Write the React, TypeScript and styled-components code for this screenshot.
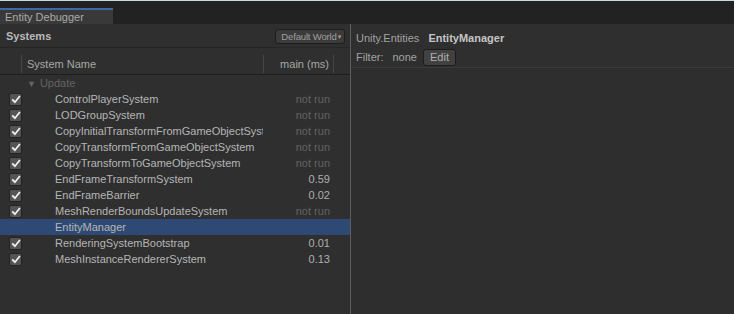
import React from "react";
import styled, { createGlobalStyle } from "styled-components";

interface ISystemRow {
  name: string;
  time?: string;
  enabled?: boolean;
  selected?: boolean;
}

const rows: ISystemRow[] = [
  { name: "ControlPlayerSystem", time: "not run", enabled: true },
  { name: "LODGroupSystem", time: "not run", enabled: true },
  { name: "CopyInitialTransformFromGameObjectSystem", time: "not run", enabled: true },
  { name: "CopyTransformFromGameObjectSystem", time: "not run", enabled: true },
  { name: "CopyTransformToGameObjectSystem", time: "not run", enabled: true },
  { name: "EndFrameTransformSystem", time: "0.59", enabled: true },
  { name: "EndFrameBarrier", time: "0.02", enabled: true },
  { name: "MeshRenderBoundsUpdateSystem", time: "not run", enabled: true },
  { name: "EntityManager", selected: true },
  { name: "RenderingSystemBootstrap", time: "0.01", enabled: true },
  { name: "MeshInstanceRendererSystem", time: "0.13", enabled: true }
];

const CheckIcon = () => (
  <svg width="10" height="9" viewBox="0 0 10 9">
    <path d="M1.2 4.4 L3.9 7.2 L8.9 1" fill="none" stroke="#f0f0f0" strokeWidth="1.8" />
  </svg>
);

export default function App() {
  return (
    <>
      <GlobalStyle />
      <Window>
        <TabBar>
          <Tab>Entity Debugger</Tab>
        </TabBar>
        <Body>
          <LeftPanel>
            <PanelHeader>
              <PanelTitle>Systems</PanelTitle>
              <WorldButton>
                Default World<Caret>▾</Caret>
              </WorldButton>
            </PanelHeader>
            <TableHeader>
              <HeaderCell $width={22} />
              <HeaderCell $width={242}>System Name</HeaderCell>
              <HeaderCell $width={70} $right>
                main (ms)
              </HeaderCell>
            </TableHeader>
            <GroupRow>
              <Triangle>▼</Triangle>Update
            </GroupRow>
            {rows.map((row) => (
              <Row key={row.name} $selected={row.selected}>
                <CheckCell>
                  {row.enabled && (
                    <CheckBox>
                      <CheckIcon />
                    </CheckBox>
                  )}
                </CheckCell>
                <NameCell>{row.name}</NameCell>
                <TimeCell $dim={row.time === "not run"}>{row.time}</TimeCell>
              </Row>
            ))}
          </LeftPanel>
          <RightPanel>
            <InfoBlock>
              <InfoLine>
                <Muted>Unity.Entities</Muted>
                <Strong>EntityManager</Strong>
              </InfoLine>
              <InfoLine>
                <Muted>Filter:</Muted>
                <Muted>none</Muted>
                <EditButton>Edit</EditButton>
              </InfoLine>
            </InfoBlock>
            <Content />
          </RightPanel>
        </Body>
      </Window>
    </>
  );
}

const GlobalStyle = createGlobalStyle`
  html, body {
    margin: 0;
    padding: 0;
    background: #2e2e2e;
  }
  body {
    font-family: "Liberation Sans", "DejaVu Sans", sans-serif;
    font-size: 11px;
    color: #b4b4b4;
  }
`;

const Window = styled.div`
  width: 734px;
  height: 314px;
  display: flex;
  flex-direction: column;
  overflow: hidden;
  background: #2f2f2f;
`;

const TabBar = styled.div`
  height: 23px;
  border-top: 1px solid #c9dadc;
  background: #222222;
  display: flex;
  align-items: flex-end;
`;

const Tab = styled.div`
  width: 108px;
  height: 14px;
  padding-left: 5px;
  border-top: 2px solid #3d6ba6;
  background: #393939;
  color: #a9a9a9;
  font-size: 11px;
  line-height: 14px;
`;

const Body = styled.div`
  flex: 1;
  display: flex;
`;

const LeftPanel = styled.div`
  width: 350px;
  border-right: 1px solid #5e5e5e;
  display: flex;
  flex-direction: column;
`;

const PanelHeader = styled.div`
  height: 23px;
  display: flex;
  align-items: center;
  justify-content: space-between;
  padding: 1px 5px 0 6px;
  box-sizing: border-box;
`;

const PanelTitle = styled.div`
  font-weight: bold;
  color: #b9b9b9;
  font-size: 11px;
`;

const WorldButton = styled.div`
  height: 13px;
  padding: 0 3px 0 5px;
  border: 1px solid #1d1d1d;
  border-radius: 3px;
  background: #3b3b3b;
  color: #9e9e9e;
  font-size: 9.6px;
  line-height: 13px;
  letter-spacing: -0.2px;
  display: flex;
  align-items: center;
`;

const Caret = styled.span`
  font-size: 7px;
  margin-left: 1px;
`;

const TableHeader = styled.div`
  height: 26px;
  border-top: 1px solid #262626;
  border-bottom: 1px solid #1f1f1f;
  display: flex;
  align-items: center;
`;

const HeaderCell = styled.div<{ $width: number; $right?: boolean }>`
  width: ${(p) => p.$width}px;
  height: 18px;
  margin-top: 6px;
  box-sizing: border-box;
  border-right: 1px solid #464646;
  padding: 0 4px 0 5px;
  text-align: ${(p) => (p.$right ? "right" : "left")};
  color: #a7a7a7;
  line-height: 18px;
  white-space: nowrap;
`;

const GroupRow = styled.div`
  height: 16px;
  line-height: 16px;
  padding-left: 27px;
  color: #646464;
`;

const Triangle = styled.span`
  font-size: 9px;
  margin-right: 4px;
`;

const Row = styled.div<{ $selected?: boolean }>`
  height: 16px;
  display: flex;
  align-items: center;
  background: ${(p) => (p.$selected ? "#2e4a74" : "transparent")};
`;

const CheckCell = styled.div`
  width: 55px;
  height: 16px;
  display: flex;
  align-items: center;
  padding-left: 9px;
  box-sizing: border-box;
`;

const CheckBox = styled.div`
  width: 13px;
  height: 13px;
  border-radius: 2px;
  background: #545454;
  border: 1px solid #232323;
  box-sizing: border-box;
  display: flex;
  align-items: center;
  justify-content: center;
`;

const NameCell = styled.div`
  width: 208px;
  overflow: hidden;
  white-space: nowrap;
  color: #b6b6b6;
  line-height: 16px;
`;

const TimeCell = styled.div<{ $dim?: boolean }>`
  width: 67px;
  text-align: right;
  color: ${(p) => (p.$dim ? "#636363" : "#b0b0b0")};
  line-height: 16px;
`;

const RightPanel = styled.div`
  flex: 1;
  display: flex;
  flex-direction: column;
`;

const InfoBlock = styled.div`
  height: 43px;
  padding: 6px 0 0 5px;
  box-sizing: border-box;
  display: flex;
  flex-direction: column;
  gap: 3px;
`;

const InfoLine = styled.div`
  height: 16px;
  display: flex;
  align-items: center;
  gap: 9px;
`;

const Muted = styled.span`
  color: #a2a2a2;
`;

const Strong = styled.span`
  color: #c6c6c6;
  font-weight: bold;
`;

const EditButton = styled.div`
  height: 15px;
  padding: 0 6px;
  margin-left: -3px;
  border: 1px solid #1d1d1d;
  border-radius: 3px;
  background: #414141;
  color: #b0b0b0;
  line-height: 15px;
`;

const Content = styled.div`
  flex: 1;
  border-top: 1px solid #3a3a3a;
  background: #2e2e2e;
`;
